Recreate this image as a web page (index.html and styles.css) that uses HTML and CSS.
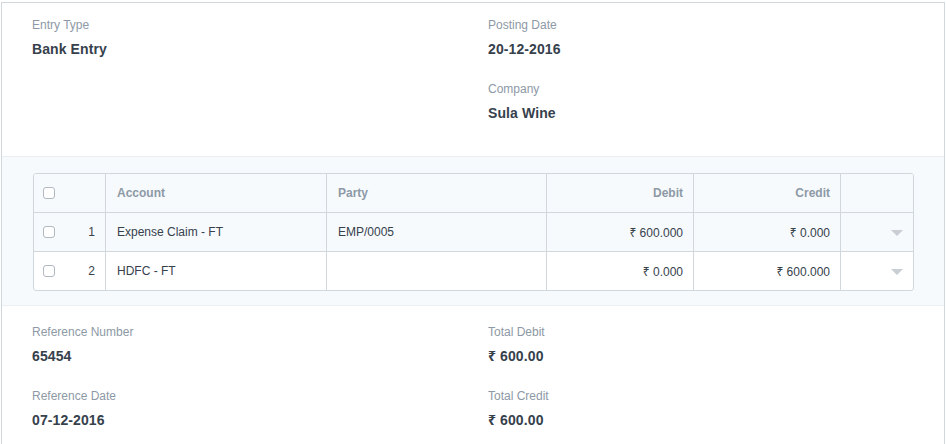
FILE: index.html
```html
<!DOCTYPE html>
<html>
<head>
<meta charset="utf-8">
<link rel="stylesheet" href="styles.css">
</head>
<body>
<div class="form">
  <section class="sec sec-top">
    <div class="col">
      <div class="field">
        <div class="label">Entry Type</div>
        <div class="value">Bank Entry</div>
      </div>
    </div>
    <div class="col">
      <div class="field">
        <div class="label">Posting Date</div>
        <div class="value">20-12-2016</div>
      </div>
      <div class="field">
        <div class="label">Company</div>
        <div class="value">Sula Wine</div>
      </div>
    </div>
  </section>
  <section class="sec-grid">
    <div class="grid">
      <div class="row head">
        <div class="cell idx"><span class="chk"></span></div>
        <div class="cell">Account</div>
        <div class="cell">Party</div>
        <div class="cell num">Debit</div>
        <div class="cell num">Credit</div>
        <div class="cell last"></div>
      </div>
      <div class="row shade">
        <div class="cell idx"><span class="chk"></span><span class="no">1</span></div>
        <div class="cell">Expense Claim - FT</div>
        <div class="cell">EMP/0005</div>
        <div class="cell num">₹ 600.000</div>
        <div class="cell num">₹ 0.000</div>
        <div class="cell last"><span class="caret"></span></div>
      </div>
      <div class="row end">
        <div class="cell idx"><span class="chk"></span><span class="no">2</span></div>
        <div class="cell">HDFC - FT</div>
        <div class="cell"></div>
        <div class="cell num">₹ 0.000</div>
        <div class="cell num">₹ 600.000</div>
        <div class="cell last"><span class="caret"></span></div>
      </div>
    </div>
  </section>
  <section class="sec sec-bottom">
    <div class="col">
      <div class="field">
        <div class="label">Reference Number</div>
        <div class="value">65454</div>
      </div>
      <div class="field">
        <div class="label">Reference Date</div>
        <div class="value">07-12-2016</div>
      </div>
    </div>
    <div class="col">
      <div class="field">
        <div class="label">Total Debit</div>
        <div class="value">₹ 600.00</div>
      </div>
      <div class="field">
        <div class="label">Total Credit</div>
        <div class="value">₹ 600.00</div>
      </div>
    </div>
  </section>
</div>
</body>
</html>
```

FILE: styles.css
```css
* { box-sizing: border-box; }
html, body { margin: 0; padding: 0; background: #fff; }
body {
  font-family: "Liberation Sans", "Noto Sans", "DejaVu Sans", sans-serif;
  color: #36414c;
}
.form {
  margin: 2px 0 0 1px;
  width: 944px;
  border: 1px solid #d1d8dd;
  border-bottom: none;
  min-height: 460px;
}
.sec {
  display: grid;
  grid-template-columns: 1fr 1fr;
  padding: 13px 15px 12px;
}
.col { padding: 0 15px; }
.field { margin-bottom: 21px; }
.label {
  font-size: 12px;
  line-height: 18px;
  color: #8d99a6;
  margin-bottom: 5px;
}
.value {
  font-size: 14px;
  line-height: 20px;
  font-weight: bold;
  color: #36414c;
  letter-spacing: 0.1px;
}
.sec-top { border-bottom: 1px solid #ebeff2; }
.sec-grid {
  background: #f7fafc;
  padding: 16px 30px 14px 31px;
  border-bottom: 1px solid #ebeff2;
}
.sec-bottom { padding-top: 17px; }
.grid {
  border: 1px solid #d1d8dd;
  border-radius: 3px;
  overflow: hidden;
  background: #fff;
}
.row {
  display: grid;
  grid-template-columns: 72px 221px 220px 147px 147px 1fr;
  height: 39px;
  border-bottom: 1px solid #d1d8dd;
  font-size: 12px;
}
.row.end { border-bottom: none; height: 38px; }
.row.head { background: #f7fafc; font-weight: bold; color: #8d99a6; }
.row.shade { background: #f7fafc; }
.cell {
  border-right: 1px solid #d1d8dd;
  display: flex;
  align-items: center;
  padding: 0 10px 0 11px;
  white-space: nowrap;
}
.cell.last { border-right: none; justify-content: flex-end; padding-right: 10px; }
.cell.num { justify-content: flex-end; }
.cell.idx { padding: 0 10px 0 9px; justify-content: space-between; }
.chk {
  width: 12px;
  height: 12px;
  border: 1px solid #b0b8c0;
  border-radius: 3px;
  background: #fff;
  display: block;
}
.no { color: #36414c; font-weight: normal; }
.caret {
  width: 0;
  height: 0;
  border-left: 6px solid transparent;
  border-right: 6px solid transparent;
  border-top: 6px solid #c8ced3;
  margin-top: 1px;
}
```
